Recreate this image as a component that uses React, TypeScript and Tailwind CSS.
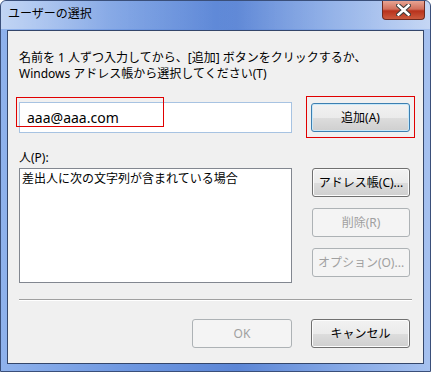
import React from "react";

const font = { fontFamily: '"Noto Sans", "Noto Sans CJK JP", sans-serif' };

// Aero style push button
function WinButton({
  label,
  disabled,
  focused,
  className = "",
}: {
  label: string;
  disabled?: boolean;
  focused?: boolean;
  className?: string;
}) {
  if (disabled) {
    return (
      <div
        className={`flex items-center justify-center rounded-[3px] border border-[#adb2b5] bg-[#f4f4f4] text-[12px] text-[#a0a0a0] ${className}`}
      >
        {label}
      </div>
    );
  }
  return (
    <div
      className={`flex items-center justify-center rounded-[3px] border text-[12px] text-black ${
        focused
          ? "border-[#3c7fb1] shadow-[inset_0_0_0_1px_#c8e8f9]"
          : "border-[#707070] shadow-[inset_0_0_0_1px_#fcfcfc]"
      } bg-[linear-gradient(#f2f2f2_0%,#ebebeb_50%,#dddddd_51%,#cfcfcf_100%)] ${className}`}
    >
      {label}
    </div>
  );
}

export default function App() {
  return (
    <div
      className="w-[431px] h-[372px] overflow-hidden rounded-t-[6px] border border-[#3a4f7a] bg-[linear-gradient(90deg,#8fb2ec_0%,#6e97e0_30%,#5c86d6_55%,#86a9e6_80%,#a6c1ef_100%)] flex flex-col"
      style={font}
    >
      {/* title bar */}
      <div className="relative h-[28px] flex items-center pl-[7px] bg-[linear-gradient(90deg,rgba(255,255,255,0.45)_0%,rgba(255,255,255,0.15)_25%,rgba(255,255,255,0)_50%,rgba(255,255,255,0.2)_85%,rgba(255,255,255,0.35)_100%)]">
        <span className="text-[12px] text-black leading-none mb-[2px]">ユーザーの選択</span>
        <div className="absolute right-[5px] top-0 w-[43px] h-[19px] rounded-b-[4px] border border-t-0 border-[#6d2a20] bg-[linear-gradient(#e8a493_0%,#d2705c_45%,#b8321c_55%,#cc5a3e_100%)] flex items-center justify-center">
          <svg width="15" height="12" viewBox="0 0 15 12">
            <path
              d="M2.5 1.5 L12.5 10.5 M12.5 1.5 L2.5 10.5"
              stroke="#3a3a3a"
              strokeWidth="4.6"
              strokeLinecap="square"
            />
            <path
              d="M2.5 1.5 L12.5 10.5 M12.5 1.5 L2.5 10.5"
              stroke="#ffffff"
              strokeWidth="2.6"
              strokeLinecap="square"
            />
          </svg>
        </div>
      </div>

      {/* client area */}
      <div className="mx-[6px] mb-[7px] mt-[1px] flex-1 border border-[#34466a] bg-[#f0f0f0] px-[11px] pt-[19px] flex flex-col">
        <div className="text-[12px] leading-[15.5px] text-black">
          <div>名前を 1 人ずつ入力してから、[追加] ボタンをクリックするか、</div>
          <div>Windows アドレス帳から選択してください(T)</div>
        </div>

        <div className="mt-[21px] flex items-start">
          <div className="relative w-[273px] h-[31px] border border-[#a7c3e2] bg-white flex items-center pl-[7px]">
            <span className="text-[14px] text-black">aaa@aaa.com</span>
            <div className="absolute left-[-4px] top-[-6px] w-[148px] h-[30px] border border-[#e00000]" />
          </div>
          <div className="relative ml-[19px] mt-[1px]">
            <WinButton label="追加(A)" focused className="w-[99px] h-[29px]" />
            <div className="absolute left-[-5px] top-[-7px] w-[109px] h-[42px] border border-[#e00000]" />
          </div>
        </div>

        <div className="mt-[17px] text-[12px] leading-[15px] text-black">人(P):</div>

        <div className="mt-[3px] flex items-start">
          <div className="w-[273px] h-[115px] border border-[#828790] bg-white px-[2px] pt-[2px]">
            <div className="text-[12px] leading-[15px] text-black">差出人に次の文字列が含まれている場合</div>
          </div>
          <div className="ml-[20px] flex flex-col gap-[11px]">
            <WinButton label="アドレス帳(C)..." className="w-[98px] h-[29px]" />
            <WinButton label="削除(R)" disabled className="w-[98px] h-[29px]" />
            <WinButton label="オプション(O)..." disabled className="w-[98px] h-[29px]" />
          </div>
        </div>

        <div className="mt-[16px] h-[2px] border-t border-[#a0a0a0] border-b-white border-b" />

        <div className="mt-[18px] flex justify-end gap-[19px] pr-[2px]">
          <WinButton label="OK" disabled className="w-[100px] h-[29px]" />
          <WinButton label="キャンセル" className="w-[99px] h-[29px]" />
        </div>
      </div>
    </div>
  );
}
